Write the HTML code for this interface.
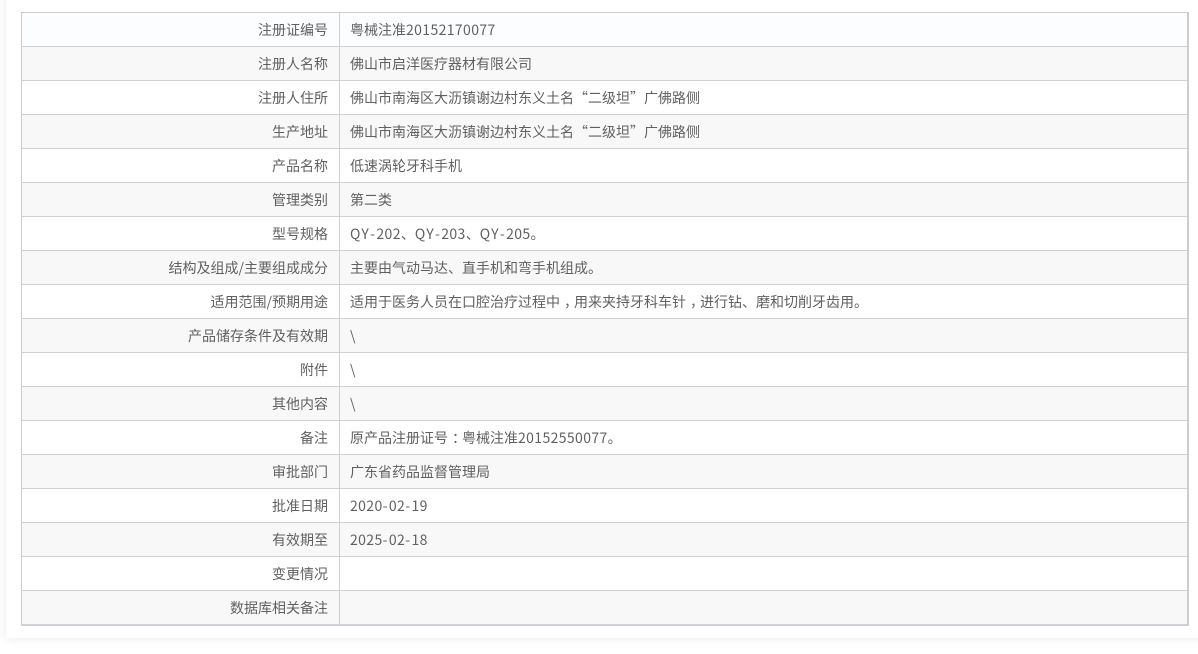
<!DOCTYPE html>
<html lang="zh-CN">
<head>
<meta charset="utf-8">
<style>
html,body{margin:0;padding:0;width:1198px;height:654px;overflow:hidden;background:#fff}
body{position:relative;font-family:"Noto Sans CJK SC","Liberation Sans",sans-serif;font-size:14px;color:#606060}
.panel{position:absolute;left:6px;top:-20px;width:1240px;height:658px;background:#fff;box-shadow:0 0 10px rgba(0,0,0,.09)}
.tb{position:absolute;left:21px;top:12px;width:1168px;height:614px;box-sizing:border-box;border:1px solid #ccc;border-right-width:2px;border-bottom-width:2px;border-bottom-color:#cfcfd4}
.r{position:absolute;left:0;width:1165px;height:34px;box-sizing:border-box;border-bottom:1px solid #d0d0d0}
.r:nth-child(even){background:#f8f8f8}
.r:first-child{background:#fcfdff}
.r:last-child{border-bottom:0;height:33px}
.l{position:absolute;left:0;top:0;width:306px;height:33px;line-height:34px;text-align:right;white-space:nowrap}
.v{position:absolute;left:328px;top:0;height:33px;line-height:34px;white-space:nowrap}
.d{position:absolute;left:317px;top:0;width:1px;height:33px;background:#d0d0d0}
.n{letter-spacing:.38px}
.h{letter-spacing:1.4px}
.q{letter-spacing:1.3px}
.c{position:relative;left:4px}
</style>
</head>
<body>
<div class="panel"></div>
<div class="tb">
<div class="r" style="top:0"><div class="l">注册证编号</div><div class="d"></div><div class="v">粤械注准<span class="n">20152170077</span></div></div>
<div class="r" style="top:34px"><div class="l">注册人名称</div><div class="d"></div><div class="v">佛山市启洋医疗器材有限公司</div></div>
<div class="r" style="top:68px"><div class="l">注册人住所</div><div class="d"></div><div class="v">佛山市南海区大沥镇谢边村东义土名“二级坦”广佛路侧</div></div>
<div class="r" style="top:102px"><div class="l">生产地址</div><div class="d"></div><div class="v">佛山市南海区大沥镇谢边村东义土名“二级坦”广佛路侧</div></div>
<div class="r" style="top:136px"><div class="l">产品名称</div><div class="d"></div><div class="v">低速涡轮牙科手机</div></div>
<div class="r" style="top:170px"><div class="l">管理类别</div><div class="d"></div><div class="v">第二类</div></div>
<div class="r" style="top:204px"><div class="l">型号规格</div><div class="d"></div><div class="v"><span class="q">QY</span><span class="h">-</span><span class="n">202</span>、<span class="q">QY</span><span class="h">-</span><span class="n">203</span>、<span class="q">QY</span><span class="h">-</span><span class="n">205</span>。</div></div>
<div class="r" style="top:238px"><div class="l">结构及组成/主要组成成分</div><div class="d"></div><div class="v">主要由气动马达、直手机和弯手机组成。</div></div>
<div class="r" style="top:272px"><div class="l">适用范围/预期用途</div><div class="d"></div><div class="v">适用于医务人员在口腔治疗过程中<span class="c">，</span>用来夹持牙科车针<span class="c">，</span>进行钻、磨和切削牙齿用。</div></div>
<div class="r" style="top:306px"><div class="l">产品储存条件及有效期</div><div class="d"></div><div class="v">\</div></div>
<div class="r" style="top:340px"><div class="l">附件</div><div class="d"></div><div class="v">\</div></div>
<div class="r" style="top:374px"><div class="l">其他内容</div><div class="d"></div><div class="v">\</div></div>
<div class="r" style="top:408px"><div class="l">备注</div><div class="d"></div><div class="v">原产品注册证号<span class="c">：</span>粤械注准<span class="n">20152550077</span>。</div></div>
<div class="r" style="top:442px"><div class="l">审批部门</div><div class="d"></div><div class="v">广东省药品监督管理局</div></div>
<div class="r" style="top:476px"><div class="l">批准日期</div><div class="d"></div><div class="v n">2020<span class="h">-</span>02<span class="h">-</span>19</div></div>
<div class="r" style="top:510px"><div class="l">有效期至</div><div class="d"></div><div class="v n">2025<span class="h">-</span>02<span class="h">-</span>18</div></div>
<div class="r" style="top:544px"><div class="l">变更情况</div><div class="d"></div></div>
<div class="r" style="top:578px"><div class="l">数据库相关备注</div><div class="d"></div></div>
</div>
</body>
</html>
